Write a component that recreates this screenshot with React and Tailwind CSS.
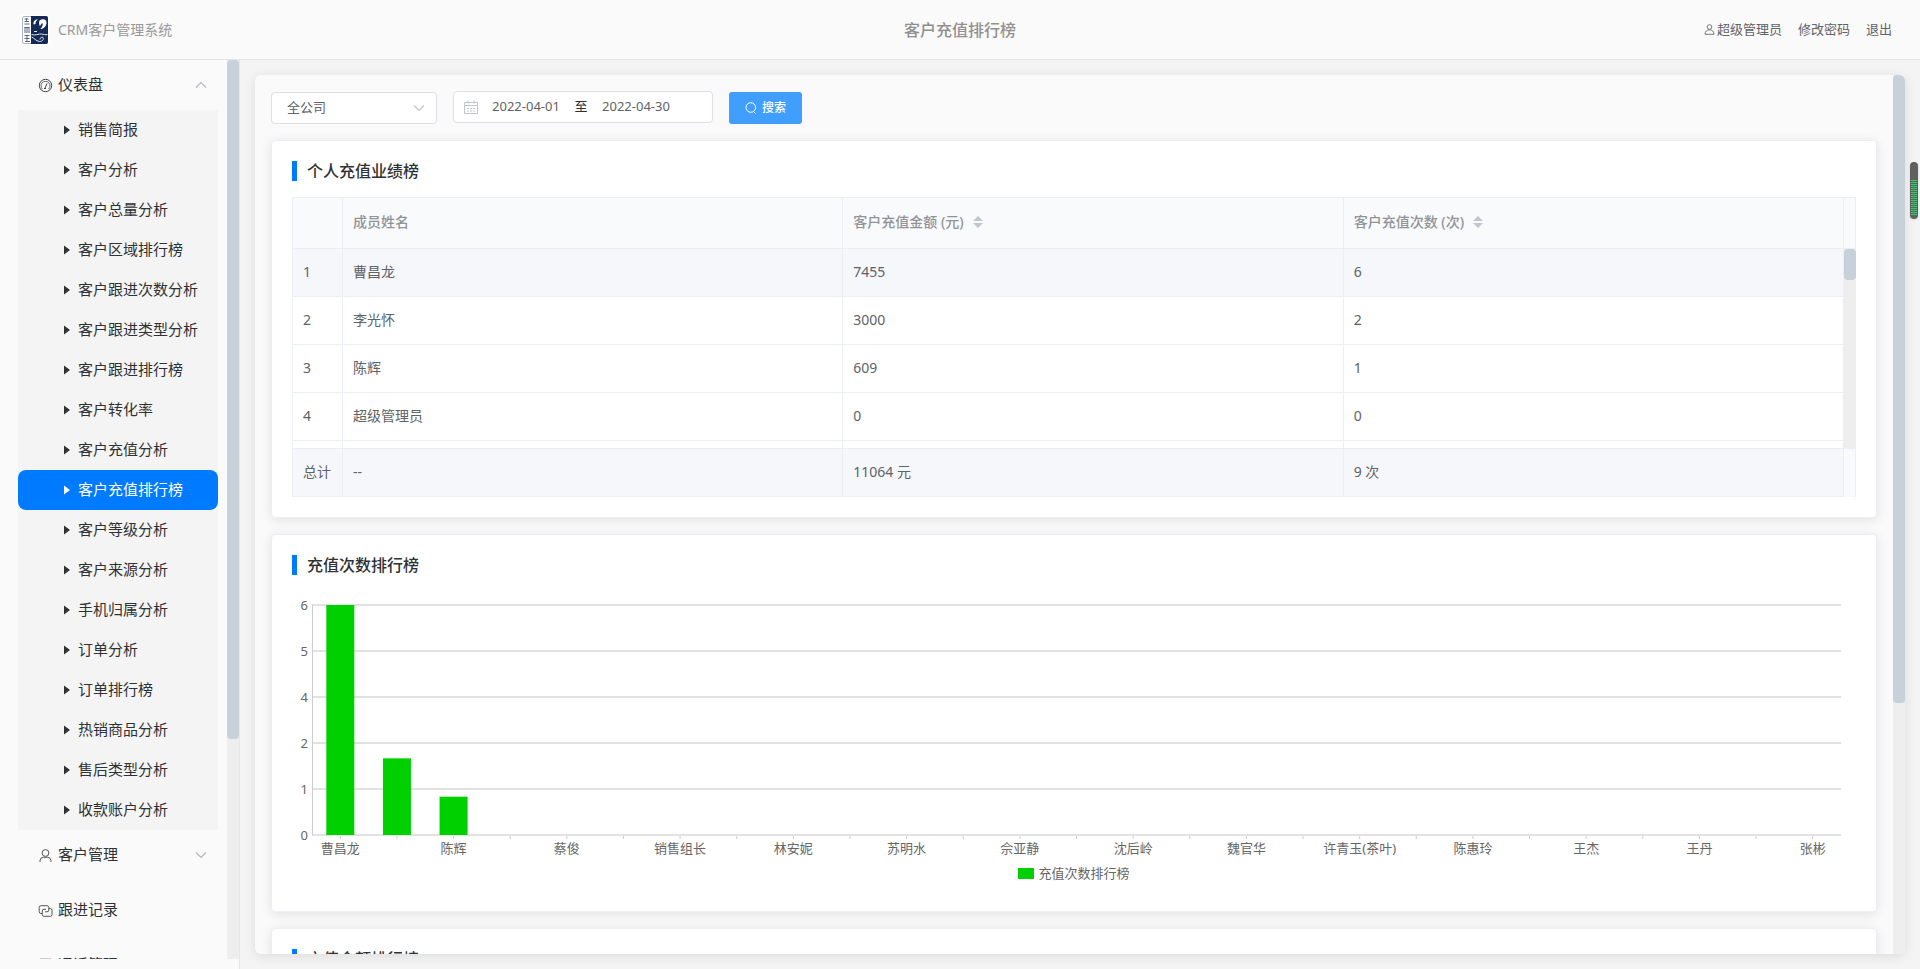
import React, { useState } from "react";

const subMenus = [
  "销售简报",
  "客户分析",
  "客户总量分析",
  "客户区域排行榜",
  "客户跟进次数分析",
  "客户跟进类型分析",
  "客户跟进排行榜",
  "客户转化率",
  "客户充值分析",
  "客户充值排行榜",
  "客户等级分析",
  "客户来源分析",
  "手机归属分析",
  "订单分析",
  "订单排行榜",
  "热销商品分析",
  "售后类型分析",
  "收款账户分析",
];

const members = [
  { id: 1, name: "曹昌龙", amount: 7455, count: 6 },
  { id: 2, name: "李光怀", amount: 3000, count: 2 },
  { id: 3, name: "陈辉", amount: 609, count: 1 },
  { id: 4, name: "超级管理员", amount: 0, count: 0 },
];

// Every second category carries a label
const categories = [
  "曹昌龙", "", "陈辉", "", "蔡俊", "", "销售组长", "", "林安妮", "", "苏明水", "", "佘亚静", "",
  "沈后岭", "", "魏官华", "", "许青玉(茶叶)", "", "陈惠玲", "", "王杰", "", "王丹", "", "张彬",
];
const counts = [6, 2, 1];
const ticks = [6, 5, 4, 2, 1, 0];

const PLOT_HEIGHT = 230;
const MAX_COUNT = 6;

function Logo() {
  return (
    <svg width="30" height="30" viewBox="-1 0 30 30" className="shrink-0" aria-hidden="true">
      <rect x="-1" width="30" height="30" fill="#fff" />
      <rect x="1.500" y="1.500" width="25" height="27" rx="1.500" fill="#fff" stroke="#a9b3c2" />
      <path d="M10 1h15a2 2 0 0 1 2 2v24a2 2 0 0 1-2 2H10z" fill="#142a55" />
      <path
        d="M3.500 4h4M5.500 3v4M3.500 6.500h4.500M3.500 9h5M4 12v6M8 12v6M3.500 12.500h5M6 13v5M3.500 20.500h5M3.500 23.500h5M4 26.500h5M6 20v7"
        stroke="#5a6680"
        fill="none"
      />
      <path
        d="M12.500 9.500c-.5-3 1.500-5.500 4.500-5-1.500 1-2.500 2.200-2.500 4.500zM18.500 5.500c3-2.500 7.500-1.500 7 2.500-.3 3.500-3 6-6 6 1.500-2 2.700-3.500 2-6-1 .5-2 1.800-2.500 3.500-1-2-1.300-4-.5-6z"
        fill="#fff"
      />
      <path
        d="M10.500 19.500c4 1.500 7-1 10-.5 2.500.5 4 1 6 .5M10.500 22c3 1 4 4 8 4.500 3 0 4.500-2 3.500-4-1-1-3 0-3 2M13 16.500h3"
        stroke="#dfe5ee"
        fill="none"
      />
    </svg>
  );
}

function OdometerIcon() {
  return (
    <svg width="15" height="15" viewBox="0 0 15 15" fill="none" stroke="#444" className="shrink-0" aria-hidden="true">
      <circle cx="7.500" cy="7.500" r="6.200" />
      <path d="M4.500 11.200a4.500 4.500 0 1 1 6 0" strokeWidth=".8" />
      <path d="M7 10.200 9 5.500M6 10.500h2" />
    </svg>
  );
}

function UserIcon() {
  return (
    <svg width="15" height="15" viewBox="0 0 15 15" fill="none" stroke="#555" className="shrink-0" aria-hidden="true">
      <circle cx="7.500" cy="5" r="3.400" />
      <path d="M2 14v-1.500a3.500 3.500 0 0 1 3.500-3.200h4a3.500 3.500 0 0 1 3.500 3.200V14" />
    </svg>
  );
}

function AccountIcon() {
  return (
    <svg width="11" height="11" viewBox="0 0 11 11" fill="none" stroke="#777" aria-hidden="true">
      <circle cx="5.500" cy="3" r="2.300" />
      <path d="M1 10.300c0-2.800 2-4.500 4.500-4.500s4.500 1.700 4.500 4.500z" />
    </svg>
  );
}

function RecordIcon() {
  return (
    <svg width="15" height="15" viewBox="0 0 15 15" fill="none" stroke="#555" className="shrink-0" aria-hidden="true">
      <path d="M4 10.500H3A1.800 1.800 0 0 1 1.200 8.700V4.500A1.800 1.800 0 0 1 3 2.700h6a1.800 1.800 0 0 1 1.800 1.800V7A1.800 1.800 0 0 1 9 8.800H7" />
      <path d="M10.800 5.500h1.500a1.700 1.700 0 0 1 1.700 1.700v4.400a1.700 1.700 0 0 1-1.700 1.700H6a1.700 1.700 0 0 1-1.700-1.700V8A1.700 1.700 0 0 1 6 6.300h2" />
    </svg>
  );
}

function MessageIcon() {
  return (
    <svg width="15" height="15" viewBox="0 0 15 15" fill="none" stroke="#ccc" className="shrink-0" aria-hidden="true">
      <path d="M2 .5h11v14H2zM4.500 4.500h6M4.500 7.500h6" />
    </svg>
  );
}

function Chevron({ up = false, color = "#b4b7bd" }) {
  return (
    <svg width="12" height="8" viewBox="0 0 12 8" fill="none" stroke={color} strokeWidth="1.200" aria-hidden="true">
      <path d={up ? "M1 6.500 6 1.500l5 5" : "M1 1.500l5 5 5-5"} />
    </svg>
  );
}

function CalendarIcon() {
  return (
    <svg width="14" height="14" viewBox="0 0 14 14" fill="none" stroke="#c0c4cc" className="shrink-0" aria-hidden="true">
      <path d="M.5 2.500h13v11H.5zM.5 5.500h13M4 .5v3M10 .5v3" />
      <path d="M3 8.500h8M3 11h8" strokeDasharray="2 1" />
    </svg>
  );
}

function SearchIcon() {
  return (
    <svg width="12" height="12" viewBox="0 0 12 12" fill="none" stroke="#fff" aria-hidden="true">
      <circle cx="5.800" cy="5.500" r="4.800" />
      <path d="M8.500 9.500 10.500 11.500" />
    </svg>
  );
}

function SortIcon() {
  return (
    <svg width="10" height="12" viewBox="0 0 10 12" fill="#c0c4cc" aria-hidden="true">
      <path d="M0 5 5 0l5 5zM0 7h10l-5 5z" />
    </svg>
  );
}

function Header() {
  return (
    <header className="grid h-[60px] shrink-0 grid-cols-3 items-center border-b border-[#e4e4e4] bg-[#fafafa]">
      <div className="flex items-center gap-2 pl-5 text-sm text-[#999]">
        <Logo />
        <span>CRM客户管理系统</span>
      </div>
      <h1 className="text-center text-base font-medium text-[#909090]">客户充值排行榜</h1>
      <div className="flex justify-end gap-4 pr-7 text-[13px] text-[#606266]">
        <a href="#account" className="flex items-center gap-[2px]">
          <AccountIcon />
          超级管理员
        </a>
        <a href="#password">修改密码</a>
        <a href="#logout">退出</a>
      </div>
    </header>
  );
}

function MenuItem({ icon, label, chevron }) {
  return (
    <a href="#menu" className="flex h-[50px] shrink-0 items-center gap-[5px] pr-[11px] pl-5">
      {icon}
      <span className="flex-1 pb-[2px]">{label}</span>
      {chevron}
    </a>
  );
}

function Sidebar({ active, onSelect }) {
  return (
    <aside className="flex w-60 shrink-0 border-r border-[#e6e6e6] bg-[#fafafa] pb-[10px]">
      <nav className="flex flex-1 flex-col gap-[5px] overflow-hidden pr-[9px] pl-[18px] text-[15px] text-[#303133]">
        <div className="shrink-0">
          <MenuItem icon={<OdometerIcon />} label="仪表盘" chevron={<Chevron up />} />
          <ul className="-mb-[5px] bg-[#f4f4f4]">
            {subMenus.map((label) => (
              <li key={label}>
                <a
                  href="#report"
                  onClick={() => onSelect(label)}
                  className={
                    label === active
                      ? "flex h-10 items-center gap-2 rounded-lg bg-[#007bff] pl-[46px] text-white"
                      : "flex h-10 items-center gap-2 pl-[46px]"
                  }
                >
                  <svg width="6" height="10" viewBox="0 0 6 10" fill="currentColor" aria-hidden="true">
                    <path d="M0 .5v9L6 5z" />
                  </svg>
                  <span className="pb-[2px]">{label}</span>
                </a>
              </li>
            ))}
          </ul>
        </div>
        <MenuItem icon={<UserIcon />} label="客户管理" chevron={<Chevron />} />
        <MenuItem icon={<RecordIcon />} label="跟进记录" />
        <MenuItem icon={<MessageIcon />} label="通话管理" />
      </nav>
      <div className="w-3 bg-[#eee]">
        <div className="h-[75.5%] rounded bg-[#c6d1da]" />
      </div>
    </aside>
  );
}

function Filters() {
  return (
    <form
      className="flex h-[33px] shrink-0 items-end gap-4 text-[13px] text-[#606266]"
      onSubmit={(e) => e.preventDefault()}
    >
      <div className="relative">
        <select
          aria-label="部门"
          className="block h-8 w-[166px] appearance-none rounded border border-[#dcdfe6] bg-white px-[15px] outline-none"
        >
          <option>全公司</option>
        </select>
        <span className="pointer-events-none absolute inset-y-0 right-3 flex items-center">
          <Chevron color="#c0c4cc" />
        </span>
      </div>
      <div className="flex h-8 w-[260px] items-center self-start rounded border border-[#dcdfe6] bg-white px-[10px]">
        <CalendarIcon />
        <input aria-label="开始日期" defaultValue="2022-04-01" className="w-24 text-center outline-none" />
        <span className="w-[14px] text-center text-[#303133]">至</span>
        <input aria-label="结束日期" defaultValue="2022-04-30" className="w-24 text-center outline-none" />
      </div>
      <button
        type="submit"
        className="flex h-8 items-center gap-[5px] rounded-[3px] bg-[#409eff] px-4 text-xs font-medium text-white"
      >
        <SearchIcon />
        搜索
      </button>
    </form>
  );
}

function Card({ title, children }) {
  return (
    <section className="h-[378px] shrink-0 rounded border border-[#ebeef5] bg-white p-5 shadow-[0_2px_12px_rgba(0,0,0,0.1)]">
      <h2 className="border-l-[5px] border-[#007bff] pl-[10px] text-base leading-5 font-medium text-[#303133]">{title}</h2>
      {children}
    </section>
  );
}

const ROW = "grid grid-cols-[50px_1fr_1fr_1fr]";
const CELL = "flex items-center border-r border-b border-[#ebeef5] px-[10px] pb-[2px]";
const HEAD_CELL = "flex items-center gap-[9px] border-r border-[#ebeef5] px-[10px] pb-[2px] font-medium";

function RankTable() {
  return (
    <div className="relative mt-4">
      <table className="block border-t border-l border-[#ebeef5] text-left text-sm text-[#606266]">
        <thead className="block border-r border-b border-[#ebeef5] bg-[#f9fafc] pr-[11px] text-[#909399]">
          <tr className={`${ROW} h-[50px]`}>
            <th className={HEAD_CELL} />
            <th className={HEAD_CELL}>成员姓名</th>
            <th className={HEAD_CELL}>
              客户充值金额 (元)
              <SortIcon />
            </th>
            <th className={HEAD_CELL}>
              客户充值次数 (次)
              <SortIcon />
            </th>
          </tr>
        </thead>
        <tbody className="block h-[199px] overflow-hidden pr-3">
          {members.map((m) => (
            <tr key={m.id} className={`${ROW} h-12 first:bg-[#f5f7fa]`}>
              <td className={CELL}>{m.id}</td>
              <td className={CELL}>{m.name}</td>
              <td className={CELL}>{m.amount}</td>
              <td className={CELL}>{m.count}</td>
            </tr>
          ))}
          <tr className={`${ROW} h-12`}>
            <td className={CELL} />
            <td className={CELL} />
            <td className={CELL} />
            <td className={CELL} />
          </tr>
        </tbody>
        <tfoot className="block border-t border-r border-[#ebeef5] bg-[#f9fafc] pr-[11px]">
          <tr className={`${ROW} h-12 bg-[#f5f7fa]`}>
            <td className={CELL}>总计</td>
            <td className={CELL}>--</td>
            <td className={CELL}>11064 元</td>
            <td className={CELL}>9 次</td>
          </tr>
        </tfoot>
      </table>
      {/* body scrollbar */}
      <div className="absolute top-[52px] right-0 h-[199px] w-3 bg-[#eee]">
        <div className="h-[31px] rounded bg-[#c6d1da]" />
      </div>
    </div>
  );
}

function CountChart() {
  const step = 100 / categories.length;

  return (
    <div className="mt-[30px]">
      <div className="flex pr-[15px] text-[13px] text-[#666]">
        <div className="-mt-[10px] flex w-5 flex-col pr-1 text-right">
          {ticks.map((t) => (
            <span key={t} className="h-[46px] leading-5 last:h-5">
              {t}
            </span>
          ))}
        </div>
        <svg className="h-[258px] min-w-0 flex-1 overflow-visible" role="img" aria-label="充值次数排行榜">
          {ticks.map((t, i) => (
            <line key={t} x1="0" x2="100%" y1={i * 46} y2={i * 46} stroke="#e2e2e2" strokeWidth="2" />
          ))}
          <line x1="0.5" x2="0.5" y1="0" y2={PLOT_HEIGHT} stroke="#ccc" />
          {categories.map((label, i) => (
            <svg key={i} x={`${(i + 0.5) * step}%`} overflow="visible">
              <line x1="0" x2="0" y1={PLOT_HEIGHT + 1} y2={PLOT_HEIGHT + 4} stroke="#ccc" />
              <text y="248" textAnchor="middle" fill="#666">
                {label}
              </text>
              {counts[i] && (
                <rect
                  x="-14"
                  width="28"
                  y={PLOT_HEIGHT - (counts[i] / MAX_COUNT) * PLOT_HEIGHT}
                  height={(counts[i] / MAX_COUNT) * PLOT_HEIGHT}
                  fill="#00d000"
                />
              )}
            </svg>
          ))}
        </svg>
      </div>
      <div className="flex items-center justify-center gap-1 text-[13px] leading-5 text-[#666]">
        <span className="h-[11px] w-4 bg-[#00d000]" />
        充值次数排行榜
      </div>
    </div>
  );
}

export default function App() {
  const [active, setActive] = useState("客户充值排行榜");

  return (
    <div className="flex h-screen flex-col overflow-hidden bg-[#f4f4f4] font-['Noto_Sans','Noto_Sans_CJK_SC',sans-serif]">
      <Header />
      <div className="flex min-h-0 flex-1">
        <Sidebar active={active} onSelect={setActive} />
        <main className="flex min-w-0 flex-1 p-[15px]">
          <div className="flex min-w-0 flex-1 overflow-hidden rounded-md bg-[#fafafa] shadow-[0_2px_12px_rgba(0,0,0,0.1)]">
            <div className="flex min-w-0 flex-1 flex-col gap-4 overflow-hidden p-4">
              <Filters />
              <Card title="个人充值业绩榜">
                <RankTable />
              </Card>
              <Card title="充值次数排行榜">
                <CountChart />
              </Card>
              <Card title="充值金额排行榜" />
            </div>
            <div className="w-3 bg-[#eee]">
              <div className="h-[71.5%] rounded bg-[#c6d1da]" />
            </div>
          </div>
        </main>
      </div>

      {/* floating level meter */}
      <div className="absolute top-[162px] right-[2px] h-[57px] w-2 rounded-full bg-[#606060] px-px pt-[18px] pb-[3px] shadow">
        <div className="h-full bg-[repeating-linear-gradient(#25d366_0_1px,#606060_1px_2px)]" />
      </div>
    </div>
  );
}
